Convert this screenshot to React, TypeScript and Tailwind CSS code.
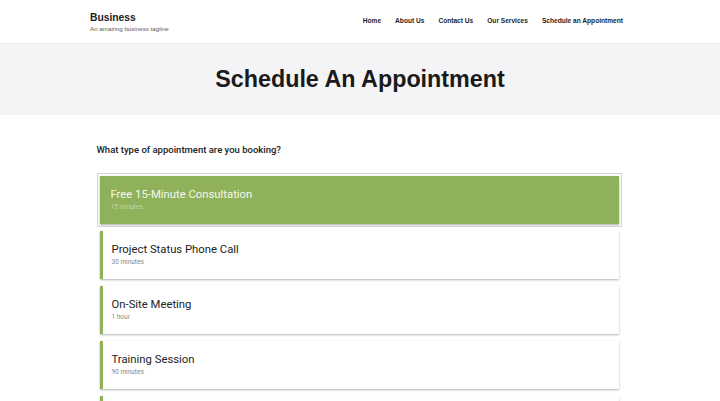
const navItems = ["Home", "About Us", "Contact Us", "Our Services", "Schedule an Appointment"];

const appointmentTypes = [
  { name: "Free 15-Minute Consultation", length: "15 minutes" },
  { name: "Project Status Phone Call", length: "30 minutes" },
  { name: "On-Site Meeting", length: "1 hour" },
  { name: "Training Session", length: "90 minutes" },
  { name: "Follow-Up Review", length: "45 minutes" },
];

const App = () => {
  const selected = 0;

  return (
    <div className="min-h-[401px] bg-white font-['Liberation_Sans',Arial,sans-serif] text-[#1d1d1f]">
      {/* Header */}
      <header className="h-[44px] border-b border-[#ebebed] bg-white">
        <div className="mx-auto flex h-full w-[540px] items-center justify-between pr-[7px]">
          <div className="pt-[1px]">
            <div className="text-[10.3px] font-bold leading-[12px] text-[#222]">Business</div>
            <div className="mt-[1px] text-[6.2px] leading-[8px] text-[#5c5c5c]">An amazing business tagline</div>
          </div>
          <nav className="-mt-[2px] flex gap-[14px] text-[6.6px] font-bold">
            {navItems.map((item) => (
              <a key={item} href="#" className="text-[#1f1f1f]">
                {item}
              </a>
            ))}
          </nav>
        </div>
      </header>

      {/* Page title */}
      <div className="flex h-[71px] items-center justify-center bg-[#f4f4f6]">
        <h1 className="text-[23.3px] font-bold text-[#1a1a1a]">Schedule An Appointment</h1>
      </div>

      {/* Appointment types */}
      <div className="mx-auto w-[527px] pt-[29px]">
        <p className="font-['Roboto',sans-serif] text-[9.5px] font-medium leading-[12px] text-[#222]">
          What type of appointment are you booking?
        </p>
        <div className="mt-[20px] flex flex-col gap-[7px] pl-[3px] pr-[5px] font-['Roboto',sans-serif]">
          {appointmentTypes.map((type, i) =>
            i === selected ? (
              <div
                key={type.name}
                className="h-[48px] bg-[#8fb15a] pl-[11px] pt-[12px] shadow-[0_1px_2px_rgba(0,0,0,0.35)] outline outline-1 outline-offset-2 outline-[#d4d4d4]"
              >
                <div className="text-[11.3px] leading-[14px] text-[#f4f8ec]">{type.name}</div>
                <div className="mt-[1px] text-[6.5px] leading-[8px] text-[#c4d8a2]">{type.length}</div>
              </div>
            ) : (
              <div
                key={type.name}
                className="h-[48px] border-l-[3px] border-[#8fb15a] bg-white pl-[9px] pt-[12px] shadow-[0_1px_2px_rgba(0,0,0,0.3)]"
              >
                <div className="text-[11.3px] leading-[14px] text-[#222]">{type.name}</div>
                <div className="mt-[1px] text-[6.5px] leading-[8px] text-[#888]">{type.length}</div>
              </div>
            )
          )}
        </div>
      </div>
    </div>
  );
};

export default App;
